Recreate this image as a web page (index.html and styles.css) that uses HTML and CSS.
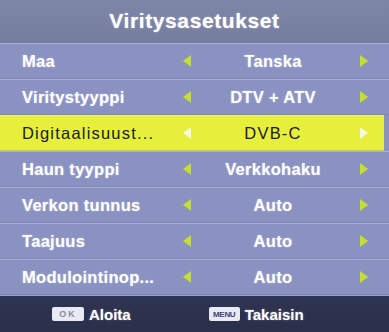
FILE: index.html
```html
<!DOCTYPE html>
<html lang="fi">
<head>
  <meta charset="UTF-8" />
  <title>Viritysasetukset</title>
  <link rel="stylesheet" href="styles.css">
</head>
<body>
  <div id="menu">
    <header>Viritysasetukset</header>

    <div class="rows">
      <div class="row">
        <span class="label">Maa</span>
        <span class="arrow left"></span>
        <span class="value">Tanska</span>
        <span class="arrow right"></span>
      </div>
      <div class="row">
        <span class="label">Viritystyyppi</span>
        <span class="arrow left"></span>
        <span class="value">DTV + ATV</span>
        <span class="arrow right"></span>
      </div>
      <div class="row active">
        <span class="label">Digitaalisuust...</span>
        <span class="arrow left"></span>
        <span class="value">DVB-C</span>
        <span class="arrow right"></span>
      </div>
      <div class="row">
        <span class="label">Haun tyyppi</span>
        <span class="arrow left"></span>
        <span class="value">Verkkohaku</span>
        <span class="arrow right"></span>
      </div>
      <div class="row">
        <span class="label">Verkon tunnus</span>
        <span class="arrow left"></span>
        <span class="value">Auto</span>
        <span class="arrow right"></span>
      </div>
      <div class="row">
        <span class="label">Taajuus</span>
        <span class="arrow left"></span>
        <span class="value">Auto</span>
        <span class="arrow right"></span>
      </div>
      <div class="row">
        <span class="label">Modulointinop...</span>
        <span class="arrow left"></span>
        <span class="value">Auto</span>
        <span class="arrow right"></span>
      </div>
    </div>

    <footer>
      <div class="hint"><span class="key ok">OK</span> Aloita</div>
      <div class="hint"><span class="key menu">MENU</span> Takaisin</div>
    </footer>
  </div>
</body>
</html>
```

FILE: styles.css
```css
* {
  box-sizing: border-box;
}

body {
  margin: 0;
  padding: 0;
  width: 389px;
  height: 332px;
  overflow: hidden;
  background: #8a92c2;
  font-family: 'Liberation Sans', Arial, sans-serif;
  color: #fff;
}

#menu {
  display: flex;
  flex-direction: column;
  height: 332px;
}

header {
  height: 43px;
  display: flex;
  align-items: center;
  justify-content: center;
  background: linear-gradient(to bottom, #7e86a8, #767d9e);
  font-size: 21px;
  font-weight: bold;
  letter-spacing: 0.6px;
  text-shadow: 0 0 2px rgba(255, 255, 255, 0.5);
  padding-bottom: 2px;
}

.rows {
  display: flex;
  flex-direction: column;
  background: #8a92c2;
}

.row {
  height: 36px;
  display: grid;
  grid-template-columns: 158px 14px 1fr 24px;
  align-items: center;
  padding: 0 13px 0 22px;
  border-top: 1px solid #a9b0da;
  border-bottom: 1px solid #7d85b3;
  font-size: 16.5px;
  font-weight: bold;
  letter-spacing: 0.3px;
  text-shadow: 0 0 2px rgba(255, 255, 255, 0.4);
}

.row.active {
  background: #e6ef3c;
  color: #1a1a10;
  font-weight: normal;
  letter-spacing: 1.2px;
  text-shadow: none;
  margin-right: 5px;
  padding-right: 8px;
  border-top-color: #eef46a;
  border-bottom-color: #c9d12e;
}

.label {
  white-space: nowrap;
}

.value {
  text-align: center;
}

.arrow {
  justify-self: center;
  width: 0;
  height: 0;
  border-top: 6px solid transparent;
  border-bottom: 6px solid transparent;
}

.arrow.left {
  border-right: 8px solid #c6de2e;
}

.arrow.right {
  border-left: 8px solid #c6de2e;
}

.row.active .arrow.left {
  border-right-color: #f6f8e0;
}

.row.active .arrow.right {
  border-left-color: #f6f8e0;
}

footer {
  flex: 1;
  display: flex;
  align-items: center;
  background: linear-gradient(to bottom, #2f3452, #2a2f4a);
  border-top: 1px solid #9aa2cc;
  font-size: 15px;
  font-weight: bold;
  padding-left: 52px;
  gap: 78px;
}

.hint {
  display: flex;
  align-items: center;
  gap: 5px;
  text-shadow: 0 0 2px rgba(255, 255, 255, 0.4);
}

.key {
  display: inline-flex;
  align-items: center;
  justify-content: center;
  height: 14px;
  border-radius: 2px;
  background: #e8e9f2;
  font-weight: bold;
  text-shadow: none;
}

.key.ok {
  width: 32px;
  color: #8a8c9c;
  font-size: 9px;
  letter-spacing: 2px;
}

.key.menu {
  width: 31px;
  color: #3a3f7a;
  font-size: 8px;
  letter-spacing: -0.3px;
}
```
